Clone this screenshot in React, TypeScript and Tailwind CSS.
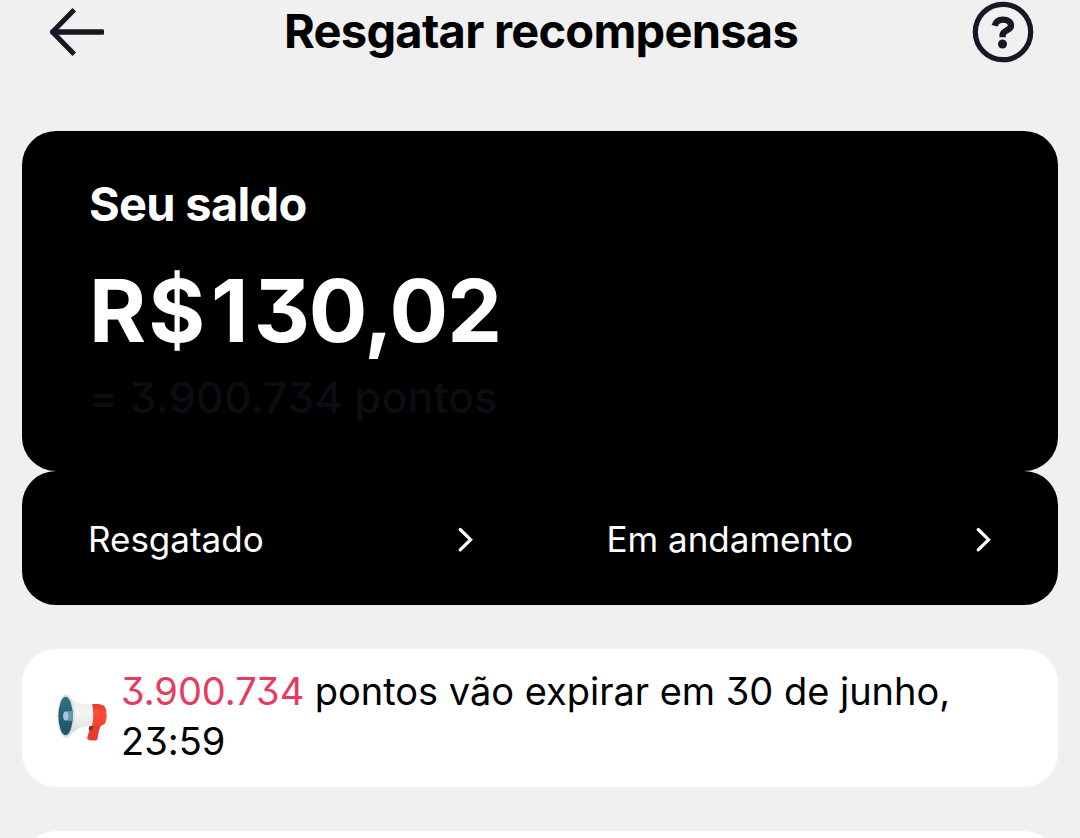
import React from "react";

function BackArrow() {
  return (
    <svg className="h-12 w-14" viewBox="0 0 56 48" fill="none" stroke="#161823" strokeLinecap="round" strokeLinejoin="round">
      <path d="M24.500 3.500 4.500 24l20 20.500" strokeWidth="5" strokeLinecap="square" />
      <path d="M5 24h49" strokeWidth="5.600" />
    </svg>
  );
}

function HelpIcon() {
  return (
    <svg className="h-[62px] w-[62px]" viewBox="0 0 62 62" fill="none">
      <circle cx="31" cy="31" r="27.700" stroke="#161823" strokeWidth="5.200" />
      <path d="M22.700 24.800C23.700 20.800 26.500 18.600 30.900 18.600c5 0 8.100 2.400 8.100 6.200 0 4.700-8.400 4.200-8.400 9.200v2.200" stroke="#161823" strokeWidth="6.400" />
      <circle cx="30.500" cy="43" r="4.500" fill="#161823" />
    </svg>
  );
}

function Chevron() {
  return (
    <svg className="h-[26px] w-4 shrink-0" viewBox="0 0 16 26" fill="none">
      <path d="M3.200 2.500l10.400 10.200L3.200 22.900" stroke="#fff" strokeWidth="3.200" strokeLinecap="round" strokeLinejoin="miter" />
    </svg>
  );
}

function Megaphone() {
  return (
    <svg className="h-[50px] w-[50px] shrink-0 overflow-visible" viewBox="0 0 50 50">
      <defs>
        <linearGradient id="horn" x1="0" y1="0" x2="0" y2="1">
          <stop offset="0" stopColor="#e4e6e8" />
          <stop offset="0.4" stopColor="#f6f6f7" />
          <stop offset="0.7" stopColor="#e6e7e9" />
          <stop offset="1" stopColor="#bfc2c6" />
        </linearGradient>
        <linearGradient id="grip" x1="0" y1="0" x2="0" y2="1">
          <stop offset="0" stopColor="#e03a2b" />
          <stop offset="0.4" stopColor="#fb4f3e" />
          <stop offset="1" stopColor="#f5402f" />
        </linearGradient>
        <linearGradient id="bell" x1="0" y1="0" x2="0" y2="1">
          <stop offset="0" stopColor="#2c7284" />
          <stop offset="1" stopColor="#1c5365" />
        </linearGradient>
      </defs>
      <path d="M32.500 33l12-1.500c-1.800 3.200-3.200 8-4 14.500-.4 2.700-10.800 1.800-10.300-1l1.800-6.500z" fill="#e83d2e" />
      <path d="M32.500 33.200l3.800-.5-1 4.600-3.800-.9z" fill="#6b3838" />
      <path d="M9.500 1.800c5.500 6.700 13 9.700 26 9.700v21.300C26 32.500 18 36 10 45z" fill="url(#horn)" />
      <path d="M35 11.300c5-.5 9.600 0 12 1.400 3.400 2.600 3.400 14.500 .8 18-2.300 2.400-8 2.800-12.800 2.100 1.600-6 1.800-15 0-21.500z" fill="url(#grip)" />
      <ellipse cx="9.200" cy="23.300" rx="8.700" ry="21.700" fill="#dcdfe2" />
      <ellipse cx="8.600" cy="23" rx="7.200" ry="19.200" fill="url(#bell)" />
      <path d="M9 18.500l6.500-.8c.4 3 .4 7 0 10.300l-6.500-.5z" fill="#6499ab" />
      <ellipse cx="8.800" cy="23" rx="2.700" ry="4.500" fill="#a9c8d3" />
    </svg>
  );
}

function LinkRow({ label }: { label: string }) {
  return (
    <a className="flex flex-1 items-center justify-between pr-[67px] pl-[66px]">
      <span className="mt-[-2px] text-[35px] leading-[44px] tracking-[-0.010px] whitespace-nowrap">{label}</span>
      <Chevron />
    </a>
  );
}

export default function App() {
  return (
    <div className="flex h-[838px] w-[1080px] flex-col overflow-hidden bg-[#f0f0f0] font-['Inter','Liberation_Sans',sans-serif] text-black [font-feature-settings:'cv09']">
      <header className="flex h-16 shrink-0 items-center justify-between pr-[46px] pl-[48px]">
        <div className="flex w-[62px]"><BackArrow /></div>
        <h1 className="mt-[-3px] text-[47px] leading-none font-bold tracking-[-0.740px] whitespace-nowrap">Resgatar recompensas</h1>
        <HelpIcon />
      </header>

      <main className="flex flex-col px-[22px] pt-[67px]">
        <section className="flex h-[340px] flex-col rounded-[34px] bg-black pt-[43px] pl-[67px] text-white">
          <h2 className="text-[47px] leading-[60px] font-bold tracking-[-0.700px]">Seu saldo</h2>
          <p className="mt-[13px] text-[87px] leading-[128px] font-bold tracking-[-1px] whitespace-nowrap">
            <span className="tracking-[2px]">R</span>
            <span className="tracking-[6px]">$</span>
            <span className="tracking-[5px]">1</span>30,02
          </p>
          <p className="-mt-2 text-[43px] leading-[60px] font-medium tracking-[0.200px] text-[#0c0c12]">= 3.900.734 pontos</p>
        </section>

        <nav className="flex h-[134px] items-stretch rounded-[34px] bg-black pt-1 text-white">
          <LinkRow label="Resgatado" />
          <div className="h-[54px] w-px self-center bg-[#040404]" />
          <LinkRow label="Em andamento" />
        </nav>

        <section className="mt-11 flex h-[138px] items-center rounded-[34px] bg-white pl-[35px]">
          <Megaphone />
          <p className="mt-[-4px] ml-[14px] text-[38px] leading-[50px] tracking-[-0.020px]">
            <span className="text-[#e8395f]">3.900.734</span> pontos vão expirar em 30 de junho,
            <br />
            23:59
          </p>
        </section>

        <section className="mt-11 h-20 shrink-0 rounded-[34px] bg-white" />
      </main>
    </div>
  );
}
